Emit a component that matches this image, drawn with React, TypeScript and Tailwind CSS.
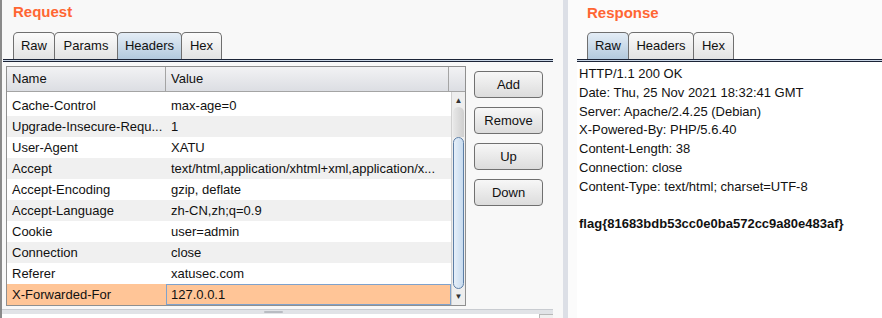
import React from 'react';

const headers: [string, string][] = [
  ['Cache-Control', 'max-age=0'],
  ['Upgrade-Insecure-Requ...', '1'],
  ['User-Agent', 'XATU'],
  ['Accept', 'text/html,application/xhtml+xml,application/x...'],
  ['Accept-Encoding', 'gzip, deflate'],
  ['Accept-Language', 'zh-CN,zh;q=0.9'],
  ['Cookie', 'user=admin'],
  ['Connection', 'close'],
  ['Referer', 'xatusec.com'],
];

const responseLines = [
  'HTTP/1.1 200 OK',
  'Date: Thu, 25 Nov 2021 18:32:41 GMT',
  'Server: Apache/2.4.25 (Debian)',
  'X-Powered-By: PHP/5.6.40',
  'Content-Length: 38',
  'Connection: close',
  'Content-Type: text/html; charset=UTF-8',
];

const Tab: React.FC<{ label: string; active?: boolean; w: string }> = ({ label, active, w }) => (
  <div
    className={`${w} h-[27px] -mr-px flex items-center justify-center rounded-t-[5px] border border-b-0 border-[#6f6f6f] text-[13px] text-[#111] ${
      active ? 'bg-gradient-to-b from-[#e4edf6] to-[#b3c9dd]' : 'bg-gradient-to-b from-[#fbfbfb] to-[#e3e3e3]'
    }`}
  >
    {label}
  </div>
);

const TabLine: React.FC = () => (
  <div className="h-[3px] border-t border-b border-[#1c2437] bg-[#c9d6e6]" />
);

const Button: React.FC<{ label: string }> = ({ label }) => (
  <button className="w-[69px] h-[27px] rounded-[4px] border border-[#707070] bg-gradient-to-b from-[#f7f7f7] to-[#dcdcdc] text-[13px] text-[#111] leading-none">
    {label}
  </button>
);

export default function App() {
  return (
    <div
      className="w-[882px] h-[318px] flex overflow-hidden bg-white"
      style={{ fontFamily: '"Liberation Sans", Arial, sans-serif' }}
    >
      {/* Request panel */}
      <div className="w-[563px] h-full flex flex-col bg-[#f8f8f8] border-l-[2px] border-[#8a8a8a]">
        <div className="h-[32px] pl-[11px] pt-[3px] text-[15px] font-bold leading-[18px] text-[#ff6633]">Request</div>
        <div className="pr-[10px] pl-[1px]">
          <div className="flex pl-[10px]">
            <Tab label="Raw" w="w-[42px]" />
            <Tab label="Params" w="w-[64px]" />
            <Tab label="Headers" active w="w-[65px]" />
            <Tab label="Hex" w="w-[41px]" />
          </div>
          <TabLine />
        </div>

        <div className="flex mt-[4px] pl-[4px]">
          {/* table */}
          <div className="w-[460px] h-[240px] border border-[#8f8f8f] bg-white flex flex-col text-[13px] text-[#111]">
            <div className="h-[25px] flex border-b border-[#a4a4a4] bg-gradient-to-b from-[#f2f2f4] to-[#dcdee3]">
              <div className="w-[159px] pl-[5px] flex items-center border-r border-[#a4a4a4]">Name</div>
              <div className="flex-1 pl-[5px] flex items-center border-r border-[#a4a4a4]">Value</div>
              <div className="w-[16px]" />
            </div>
            <div className="flex-1 flex pt-[3px]">
              <div className="flex-1 flex flex-col">
                {headers.map(([n, v], i) => (
                  <div key={n} className={`h-[21px] flex items-center ${i % 2 ? 'bg-[#f0f0f0]' : 'bg-white'}`}>
                    <div className="w-[159px] pl-[5px] whitespace-nowrap overflow-hidden">{n}</div>
                    <div className="flex-1 pl-[5px] whitespace-nowrap overflow-hidden">{v}</div>
                  </div>
                ))}
                <div className="h-[21px] flex bg-[#ffc597]">
                  <div className="w-[159px] pl-[5px] flex items-center">X-Forwarded-For</div>
                  <div className="flex-1 pl-[4px] flex items-center border border-[#7fa2cc]">127.0.0.1</div>
                </div>
              </div>
              {/* scrollbar */}
              <div className="w-[14px] -mt-[3px] pt-[3px] flex flex-col bg-[#eeeeee] border-l border-[#d0d0d0]">
                <div className="h-[12px] flex items-center justify-center text-[8px] text-[#333]">▲</div>
                <div className="h-[30px] mx-[1px] rounded-t-[6px] bg-gradient-to-r from-[#e8e8e8] to-[#cfcfcf]" />
                <div className="flex-1 mx-[1px] rounded-[6px] border border-[#5c7ea6] bg-gradient-to-r from-[#e6eff9] to-[#c7dbef]" />
                <div className="h-[16px] flex items-center justify-center text-[8px] text-[#333]">▼</div>
              </div>
            </div>
          </div>

          {/* buttons */}
          <div className="ml-[8px] mt-[5px] flex flex-col gap-[9px]">
            <Button label="Add" />
            <Button label="Remove" />
            <Button label="Up" />
            <Button label="Down" />
          </div>
        </div>

        {/* split divider */}
        <div className="mt-[3px] mr-[10px] h-[5px] bg-[#e1e3e7] border-t border-[#c9ccd1] flex justify-center">
          <div className="w-[19px] h-[2px] mt-[1px] ml-[-8px] bg-[#b9bcc2] rounded" />
        </div>
        <div className="flex-1 mr-[10px] bg-white flex justify-end">
          <div className="w-[14px] border-l border-t border-[#b8b8b8] bg-[#f0f0f0]" />
        </div>
      </div>

      {/* separator */}
      <div className="w-[5px] h-full bg-[#dcdfe6]" />

      {/* Response panel */}
      <div className="flex-1 h-full flex flex-col bg-[#fbfbfb] pl-[9px]">
        <div className="h-[32px] pl-[10px] pt-[4px] text-[15px] font-bold leading-[18px] text-[#ff6633]">Response</div>
        <div className="flex pl-[10px]">
          <Tab label="Raw" active w="w-[42px]" />
          <Tab label="Headers" w="w-[66px]" />
          <Tab label="Hex" w="w-[41px]" />
        </div>
        <TabLine />
        <div className="flex-1 bg-white pl-[2px] pt-[3px] text-[13px] leading-[18.8px] text-[#111]">
          {responseLines.map((l) => (
            <div key={l} className="whitespace-nowrap">{l}</div>
          ))}
          <div className="h-[18.8px]" />
          <div className="font-bold whitespace-nowrap">flag{'{'}81683bdb53cc0e0ba572cc9a80e483af{'}'}</div>
        </div>
      </div>
    </div>
  );
}
